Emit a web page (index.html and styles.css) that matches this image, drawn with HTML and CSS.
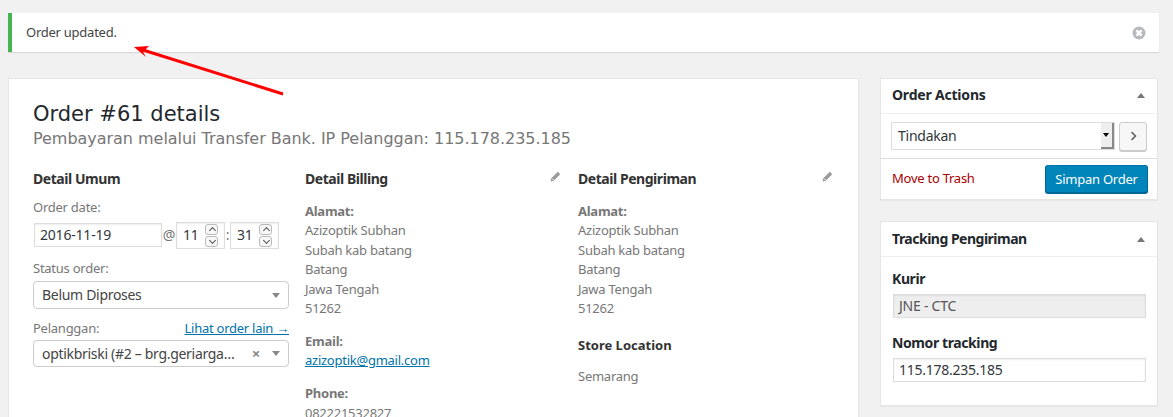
FILE: index.html
```html
<!DOCTYPE html>
<html lang="id">
<head>
<meta charset="utf-8">
<title>Order #61 details</title>
<link rel="stylesheet" href="styles.css">
</head>
<body>
<div class="notice">
  <p class="notice-text">Order updated.</p>
  <svg class="dismiss" width="14" height="14" viewBox="0 0 14 14"><circle cx="7" cy="7" r="6.5" fill="#b4b9be"/><path d="M4.4 4.4l5.2 5.2M9.6 4.4l-5.2 5.2" stroke="#fff" stroke-width="2.6"/></svg>
</div>
<svg class="arrow" width="160" height="60" viewBox="0 0 160 60"><path d="M149 49L9 5" stroke="#fe0000" stroke-width="3"/><path d="M0 2L15 1L9 7L12 12Z" fill="#fe0000"/></svg>
<div class="columns">
  <main class="panel">
    <h2 class="order-title">Order #61 details</h2>
    <p class="order-meta">Pembayaran melalui Transfer Bank. IP Pelanggan: 115.178.235.185</p>
    <div class="order-grid">
      <section>
        <h3 class="col-title">Detail Umum</h3>
        <div class="field-label first">Order date:</div>
        <div class="date-row">
          <span class="input date">2016-11-19</span>
          <span class="sep">@</span>
          <span class="number"><span>11</span><span class="spin"><i class="up"></i><i class="down"></i></span></span>
          <span class="sep colon">:</span>
          <span class="number"><span>31</span><span class="spin"><i class="up"></i><i class="down"></i></span></span>
        </div>
        <div class="field-label status-label">Status order:</div>
        <div class="select2 tall"><span class="s-text">Belum Diproses</span><b class="caret"></b></div>
        <div class="field-label split"><span>Pelanggan:</span><a href="#">Lihat order lain →</a></div>
        <div class="select2"><span class="s-text">optikbriski (#2 – brg.geriarga…</span><span class="clear">×</span><b class="caret"></b></div>
      </section>
      <section>
        <h3 class="col-title with-edit">Detail Billing
          <svg class="pencil" width="11" height="11" viewBox="0 0 11 11"><path d="M0.5 10.5l0.8-3.2L7.8 0.8l2.4 2.4L3.7 9.7z" fill="#999"/><path d="M2 7.5l1.5 1.5" stroke="#fff"/></svg>
        </h3>
        <p class="addr"><strong>Alamat:</strong><br>Azizoptik Subhan<br>Subah kab batang<br>Batang<br>Jawa Tengah<br>51262</p>
        <p class="addr gap"><strong>Email:</strong><br><a href="#">azizoptik@gmail.com</a></p>
        <p class="addr gap2"><strong>Phone:</strong><br>082221532827</p>
      </section>
      <section>
        <h3 class="col-title with-edit">Detail Pengiriman
          <svg class="pencil" width="11" height="11" viewBox="0 0 11 11"><path d="M0.5 10.5l0.8-3.2L7.8 0.8l2.4 2.4L3.7 9.7z" fill="#999"/><path d="M2 7.5l1.5 1.5" stroke="#fff"/></svg>
        </h3>
        <p class="addr"><strong>Alamat:</strong><br>Azizoptik Subhan<br>Subah kab batang<br>Batang<br>Jawa Tengah<br>51262</p>
        <h4 class="store-title">Store Location</h4>
        <p class="addr store">Semarang</p>
      </section>
    </div>
  </main>
  <aside class="side">
    <div class="box">
      <h3 class="box-title first-title">Order Actions<b class="tri"></b></h3>
      <div class="action-row">
        <span class="native">Tindakan<span class="native-btn"></span></span>
        <span class="go"><svg width="7" height="10" viewBox="0 0 7 10"><path d="M1.5 1l4 4-4 4" fill="none" stroke="#555" stroke-width="1.4"/></svg></span>
      </div>
      <div class="action-foot">
        <a class="trash" href="#">Move to Trash</a>
        <span class="primary">Simpan Order</span>
      </div>
    </div>
    <div class="box">
      <h3 class="box-title">Tracking Pengiriman<b class="tri"></b></h3>
      <div class="track">
        <div class="track-label">Kurir</div>
        <div class="track-input off">JNE - CTC</div>
        <div class="track-label second">Nomor tracking</div>
        <div class="track-input">115.178.235.185</div>
      </div>
    </div>
  </aside>
</div>
</body>
</html>
```
FILE: styles.css
```css
* { box-sizing: border-box; }
html, body { margin: 0; height: 417px; overflow: hidden; }
body {
  position: relative;
  background: #f1f1f1;
  padding: 13px 14px 0 8px;
  font: 13px/19.5px "Noto Sans", sans-serif;
  letter-spacing: -0.25px;
  color: #444;
}
.notice {
  height: 39px;
  background: #fff;
  border-left: 4px solid #46b450;
  box-shadow: 0 1px 1px rgba(0,0,0,.1);
  display: flex;
  align-items: center;
  justify-content: space-between;
  padding: 0 13px 0 14px;
}
.notice-text { margin: 0; color: #444; }
.arrow { position: absolute; left: 134px; top: 45px; }
.columns { display: flex; gap: 21px; margin-top: 26px; align-items: flex-start; }
.panel {
  width: 851px;
  height: 345px;
  flex: none;
  background: #fff;
  border: 1px solid #e5e5e5;
  box-shadow: 0 1px 1px rgba(0,0,0,.04);
  padding: 22px 24px 0 24px;
  overflow: hidden;
}
.order-title {
  margin: 0;
  font: 400 21px/27px "DejaVu Sans", sans-serif;
  letter-spacing: 0;
  color: #23282d;
}
.order-meta {
  margin: 0;
  font: 400 16px/21px "DejaVu Sans", sans-serif;
  letter-spacing: -0.03px;
  color: #777;
}
.order-grid {
  display: grid;
  grid-template-columns: 256px 257px 256px;
  column-gap: 16px;
  margin-top: 20px;
}
.col-title {
  position: relative;
  margin: 0;
  font-size: 14px;
  line-height: 20px;
  font-weight: 700;
  letter-spacing: -0.45px;
  color: #333;
}
.pencil { position: absolute; right: 1.5px; top: 2px; }
.field-label { color: #777; }
.first { margin-top: 9px; }
.date-row { display: flex; align-items: center; margin-top: 4px; height: 27px; }
.input, .number {
  display: flex;
  align-items: center;
  border: 1px solid #ddd;
  box-shadow: inset 0 1px 2px rgba(0,0,0,.07);
  color: #32373c;
  font-size: 14px;
  letter-spacing: -0.2px;
  background: #fff;
}
.date { width: 128px; height: 24px; margin-left: 1px; padding-left: 5px; }
.sep { width: 14px; text-align: center; color: #777; font-size: 14px; }
.colon { width: 5px; margin: 0; }
.number {
  width: 49px;
  height: 27px;
  padding-left: 6px;
  justify-content: space-between;
  padding-right: 6px;
}
.spin { display: flex; flex-direction: column; gap: 1px; }
.spin i {
  display: block;
  width: 13px;
  height: 11px;
  border: 1px solid #bbb;
  border-radius: 3px;
  position: relative;
  background: #f7f7f7;
}
.spin i::after {
  content: "";
  position: absolute;
  left: 3.5px;
  width: 4px;
  height: 4px;
  border-left: 1px solid #555;
  border-top: 1px solid #555;
  transform: rotate(45deg);
  top: 3px;
}
.spin i.down::after { transform: rotate(225deg); top: 1px; }
.status-label { margin-top: 10px; }
.select2 {
  display: flex;
  align-items: center;
  height: 27px;
  margin-top: 3px;
  padding: 0 8px;
  background: #fff;
  border: 1px solid #ccc;
  border-radius: 4px;
  font-size: 14px;
  letter-spacing: -0.3px;
  color: #444;
}
.tall { height: 28px; }
.s-text { flex: 1; white-space: nowrap; overflow: hidden; }
.clear { color: #888; font-weight: 700; font-size: 15px; margin-right: 12px; }
.caret {
  width: 0;
  height: 0;
  border: 4px solid transparent;
  border-top: 5px solid #888;
  border-bottom: 0;
}
.split { display: flex; justify-content: space-between; margin-top: 10px; margin-bottom: -1.5px; }
.split a, .addr a { color: #0073aa; text-decoration: underline; }
.addr { margin: 12.5px 0 0; color: #777; }
.addr strong { font-weight: 700; }
.gap { margin-top: 13px; }
.gap2 { margin-top: 13.5px; }
.store-title {
  margin: 16px 0 0;
  font-size: 13px;
  line-height: 20px;
  font-weight: 700;
  letter-spacing: 0;
  color: #333;
}
.store { margin-top: 12px; }
.side { width: 278px; flex: none; display: flex; flex-direction: column; gap: 21px; }
.box {
  background: #fff;
  border: 1px solid #e5e5e5;
  box-shadow: 0 1px 1px rgba(0,0,0,.04);
}
.box-title {
  display: flex;
  align-items: center;
  justify-content: space-between;
  height: 35px;
  margin: 0;
  padding: 0 12px 0 11px;
  font-size: 14px;
  font-weight: 700;
  letter-spacing: -0.5px;
  color: #23282d;
  border-bottom: 1px solid #eee;
}
.first-title { padding-bottom: 2px; letter-spacing: -0.2px; }
.action-row { display: flex; align-items: center; gap: 4px; height: 44px; padding: 0 10px; }
.tri {
  width: 0;
  height: 0;
  border: 4px solid transparent;
  border-bottom: 5px solid #72777c;
  border-top: 0;
}
.native {
  position: relative;
  width: 225px;
  height: 28px;
  padding-left: 6px;
  line-height: 26px;
  font-size: 14px;
  color: #32373c;
  border: 1px solid #ddd;
}
.native-btn {
  position: absolute;
  right: 0;
  top: 0;
  width: 13px;
  height: 26px;
  background: #eee;
  border-right: 2px solid #888;
  border-bottom: 2px solid #888;
}
.native-btn::after {
  content: "";
  position: absolute;
  left: 2px;
  top: 10px;
  border: 3px solid transparent;
  border-top: 4px solid #000;
  border-bottom: 0;
}
.go {
  display: flex;
  align-items: center;
  justify-content: center;
  width: 28px;
  height: 29px;
  background: #f7f7f7;
  border: 1px solid #ccc;
  border-radius: 3px;
  box-shadow: 0 1px 0 #ccc;
}
.action-foot {
  display: flex;
  align-items: center;
  justify-content: space-between;
  height: 41px;
  padding: 0 9px 0 11px;
  border-top: 1px solid #ddd;
}
.trash { color: #a00; text-decoration: none; }
.primary {
  width: 103px;
  height: 28px;
  text-align: center;
  line-height: 26px;
  color: #fff;
  background: #0085ba;
  border: 1px solid #006799;
  border-top-color: #0073aa;
  border-radius: 3px;
  box-shadow: 0 1px 0 #006799;
}
.track { padding: 11px 11px 23px 11px; }
.track-label { font-size: 14px; font-weight: 700; letter-spacing: -0.4px; color: #23282d; line-height: 22px; }
.second { margin-top: 14px; }
.track-input {
  height: 24px;
  margin: 4px 0 0 1px;
  padding-left: 5px;
  font-size: 14px;
  line-height: 22px;
  color: #32373c;
  border: 1px solid #ddd;
  box-shadow: inset 0 1px 2px rgba(0,0,0,.07);
}
.off { background: #eee; color: #555; }
```
